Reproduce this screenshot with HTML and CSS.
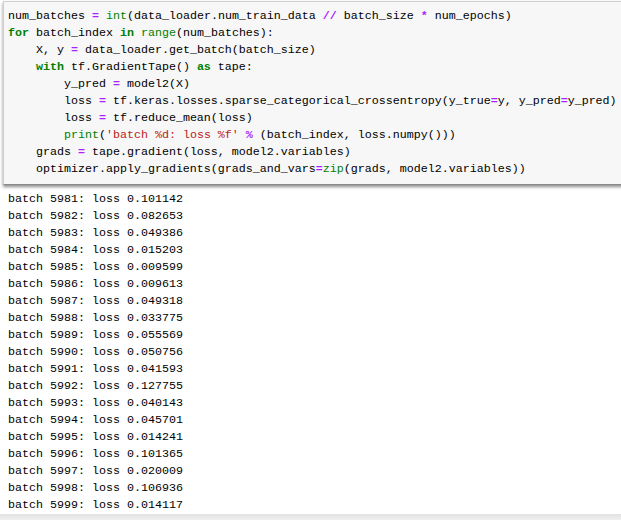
FILE: index.html
```html
<!DOCTYPE html>
<html>
<head>
<meta charset="utf-8">
<link rel="stylesheet" href="styles.css">
</head>
<body>
<div class="page">
  <div class="cell">
<pre class="code">num_batches <span class="o">=</span> <span class="b">int</span>(data_loader.num_train_data <span class="o">//</span> batch_size <span class="o">*</span> num_epochs)
<span class="k">for</span> batch_index <span class="k">in</span> <span class="b">range</span>(num_batches):
    X, y <span class="o">=</span> data_loader.get_batch(batch_size)
    <span class="k">with</span> tf.GradientTape() <span class="k">as</span> tape:
        y_pred <span class="o">=</span> model2(X)
        loss <span class="o">=</span> tf.keras.losses.sparse_categorical_crossentropy(y_true<span class="o">=</span>y, y_pred<span class="o">=</span>y_pred)
        loss <span class="o">=</span> tf.reduce_mean(loss)
        <span class="b">print</span>(<span class="s">'batch %d: loss %f'</span> <span class="o">%</span> (batch_index, loss.numpy()))
    grads <span class="o">=</span> tape.gradient(loss, model2.variables)
    optimizer.apply_gradients(grads_and_vars<span class="o">=</span><span class="b">zip</span>(grads, model2.variables))</pre>
  </div>
<pre class="output">batch 5980: loss 0.018672
batch 5981: loss 0.101142
batch 5982: loss 0.082653
batch 5983: loss 0.049386
batch 5984: loss 0.015203
batch 5985: loss 0.009599
batch 5986: loss 0.009613
batch 5987: loss 0.049318
batch 5988: loss 0.033775
batch 5989: loss 0.055569
batch 5990: loss 0.050756
batch 5991: loss 0.041593
batch 5992: loss 0.127755
batch 5993: loss 0.040143
batch 5994: loss 0.045701
batch 5995: loss 0.014241
batch 5996: loss 0.101365
batch 5997: loss 0.020009
batch 5998: loss 0.106936
batch 5999: loss 0.014117</pre>
  <div class="bottombar"></div>
</div>
</body>
</html>
```
FILE: styles.css
```css
html, body {
  margin: 0;
  padding: 0;
  background: #ffffff;
}
.page {
  position: relative;
  width: 621px;
  height: 520px;
  overflow: hidden;
  background: #ffffff;
}
pre {
  margin: 0;
  font-family: "Liberation Mono", "DejaVu Sans Mono", monospace;
  font-size: 11.67px;
  line-height: 17px;
  color: #000000;
}
.cell {
  position: absolute;
  top: 1px;
  left: 3px;
  width: 640px;
  height: 176px;
  padding: 6px 0 0 4px;
  background: #f7f7f7;
  border-top: 1px solid #cfcfcf;
  border-left: 1px solid #cfcfcf;
  border-bottom: 1px solid #8a8a8a;
  box-shadow: 0 2px 3px rgba(0, 0, 0, 0.45);
  z-index: 2;
}
.k { color: #008000; font-weight: bold; }
.b { color: #008000; }
.o { color: #aa22ff; font-weight: bold; }
.s { color: #ba2121; }
.output {
  padding: 174px 0 0 8px;
  height: 340px;
}
.bottombar {
  height: 6px;
  background: linear-gradient(#e2e2e2, #f0f0f0);
}
```
